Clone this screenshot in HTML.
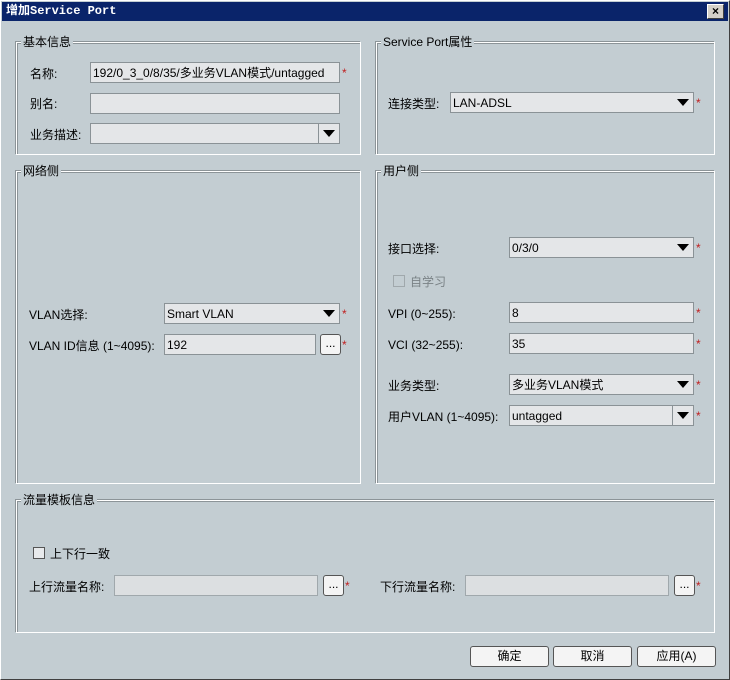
<!DOCTYPE html><html><head><meta charset="utf-8"><style>
*{box-sizing:border-box;margin:0;padding:0}
body{width:730px;height:680px;background:#c3cdd2;font-family:"Liberation Sans","Noto Sans CJK SC",sans-serif;font-size:12px;color:#000;position:relative;overflow:hidden}
.a{position:absolute}
.win{position:absolute;left:0;top:0;width:730px;height:680px;border:1px solid #fff;border-right-color:#404040;border-bottom-color:#404040}
.title{left:2px;top:2px;width:726px;height:19px;background:#0a246a;color:#fff;font-weight:bold;font-family:"Liberation Mono","Noto Sans CJK SC",monospace;font-size:12px;line-height:19px;padding-left:4px}
.close{left:707px;top:4px;width:17px;height:15px;background:#d4d0c8;border:1px solid #fff;border-right-color:#404040;border-bottom-color:#404040;font-size:12px;line-height:12px;text-align:center;color:#000;font-weight:bold}
.grp{position:absolute;border:1px solid #fff;box-shadow:inset 1px 1px 0 #8c9498, -1px -1px 0 #8c9498}
.gl{position:absolute;background:#c3cdd2;padding:0 2px;top:-8px;left:4px;font-size:12px;line-height:14px}
.inp{position:absolute;height:21px;background:#e4e6e8;border:1px solid #8a9296;font-size:12px;line-height:21px;padding-left:2px}
.arr{position:absolute;right:2px;top:6px;width:0;height:0;border-left:6px solid transparent;border-right:6px solid transparent;border-top:7px solid #000}
.sep{position:absolute;right:20px;top:0;bottom:0;border-left:1px solid #8a9296}
.star{position:absolute;color:#c02020;font-size:12px;margin-top:3px}
.lbl{position:absolute;font-size:12px;line-height:14px;margin-top:1px}
.btn{position:absolute;height:21px;background:#f4f4f4;border:1px solid #555;border-radius:3px;text-align:center;font-size:12px;line-height:19px}
.cb{position:absolute;width:12px;height:12px;border:1px solid #555;background:#e8eaec}
</style></head><body>
<div class="win"></div>
<div class="a title">增加Service Port</div>
<div class="a close">×</div>

<div class="grp" style="left:16px;top:42px;width:345px;height:113px"><div class="gl">基本信息</div></div>
<div class="grp" style="left:376px;top:42px;width:339px;height:113px"><div class="gl">Service Port属性</div></div>
<div class="grp" style="left:16px;top:171px;width:345px;height:313px"><div class="gl">网络侧</div></div>
<div class="grp" style="left:376px;top:171px;width:339px;height:313px"><div class="gl">用户侧</div></div>
<div class="grp" style="left:16px;top:500px;width:699px;height:133px"><div class="gl">流量模板信息</div></div>

<div class="lbl" style="left:30px;top:66px">名称:</div>
<div class="inp" style="left:90px;top:62px;width:250px">192/0_3_0/8/35/多业务VLAN模式/untagged</div><div class="star" style="left:342px;top:63px">*</div>
<div class="lbl" style="left:30px;top:96px">别名:</div>
<div class="inp" style="left:90px;top:93px;width:250px"></div>
<div class="lbl" style="left:30px;top:127px">业务描述:</div>
<div class="inp" style="left:90px;top:123px;width:250px"><div class="sep"></div><div class="arr" style="right:4px"></div></div>

<div class="lbl" style="left:388px;top:96px">连接类型:</div>
<div class="inp" style="left:450px;top:92px;width:244px">LAN-ADSL<div class="arr" style="right:4px"></div></div><div class="star" style="left:696px;top:93px">*</div>

<div class="lbl" style="left:29px;top:307px">VLAN选择:</div>
<div class="inp" style="left:164px;top:303px;width:176px">Smart VLAN<div class="arr" style="right:4px"></div></div><div class="star" style="left:342px;top:304px">*</div>
<div class="lbl" style="left:29px;top:338px">VLAN ID信息 (1~4095):</div>
<div class="inp" style="left:164px;top:334px;width:152px">192</div>
<div class="btn" style="left:320px;top:334px;width:21px;line-height:16px">...</div><div class="star" style="left:342px;top:335px">*</div>

<div class="lbl" style="left:388px;top:241px">接口选择:</div>
<div class="inp" style="left:509px;top:237px;width:185px">0/3/0<div class="arr" style="right:4px"></div></div><div class="star" style="left:696px;top:238px">*</div>
<div class="cb" style="left:393px;top:275px;border-color:#a0a8ac;background:#c3cdd2"></div><div class="lbl" style="left:410px;top:274px;color:#7a8286">自学习</div>
<div class="lbl" style="left:388px;top:306px">VPI (0~255):</div>
<div class="inp" style="left:509px;top:302px;width:185px">8</div><div class="star" style="left:696px;top:303px">*</div>
<div class="lbl" style="left:388px;top:337px">VCI (32~255):</div>
<div class="inp" style="left:509px;top:333px;width:185px">35</div><div class="star" style="left:696px;top:334px">*</div>
<div class="lbl" style="left:388px;top:378px">业务类型:</div>
<div class="inp" style="left:509px;top:374px;width:185px">多业务VLAN模式<div class="arr" style="right:4px"></div></div><div class="star" style="left:696px;top:375px">*</div>
<div class="lbl" style="left:388px;top:409px">用户VLAN (1~4095):</div>
<div class="inp" style="left:509px;top:405px;width:185px">untagged<div class="sep"></div><div class="arr" style="right:4px"></div></div><div class="star" style="left:696px;top:406px">*</div>

<div class="cb" style="left:33px;top:547px"></div><div class="lbl" style="left:50px;top:546px">上下行一致</div>
<div class="lbl" style="left:29px;top:579px">上行流量名称:</div>
<div class="inp" style="left:114px;top:575px;width:204px;background:#dcdfe1;border-color:#a0a8ac"></div>
<div class="btn" style="left:323px;top:575px;width:21px;line-height:16px">...</div><div class="star" style="left:345px;top:576px">*</div>
<div class="lbl" style="left:380px;top:579px">下行流量名称:</div>
<div class="inp" style="left:465px;top:575px;width:204px;background:#dcdfe1;border-color:#a0a8ac"></div>
<div class="btn" style="left:674px;top:575px;width:21px;line-height:16px">...</div><div class="star" style="left:696px;top:576px">*</div>

<div class="btn" style="left:470px;top:646px;width:79px">确定</div>
<div class="btn" style="left:553px;top:646px;width:79px">取消</div>
<div class="btn" style="left:637px;top:646px;width:79px">应用(A)</div>
</body></html>
